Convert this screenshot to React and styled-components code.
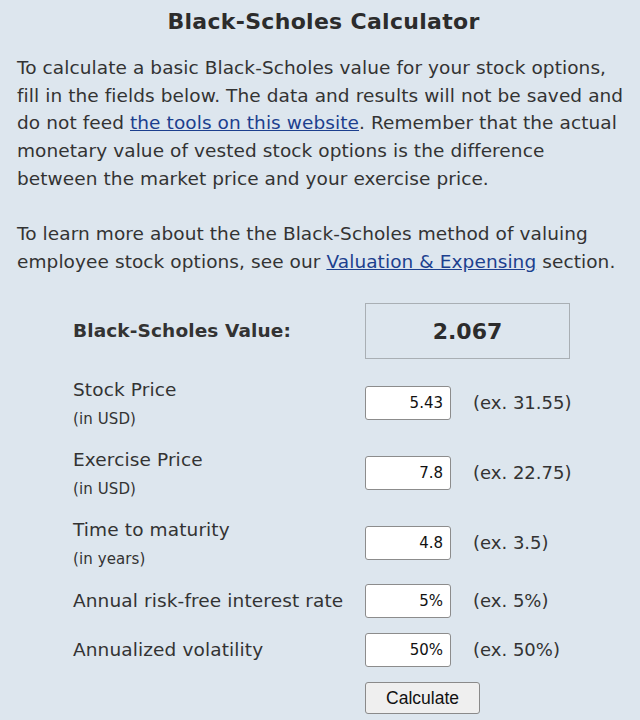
import React from "react";
import styled, { createGlobalStyle } from "styled-components";

const GlobalStyle = createGlobalStyle`
  html, body {
    margin: 0;
    padding: 0;
    background: #dde6ee;
  }
  body {
    font-family: "DejaVu Sans", Verdana, sans-serif;
    color: #333333;
  }
`;

const Page = styled.div`
  width: 640px;
  box-sizing: border-box;
  padding: 8px 10px 0 17px;
`;

const Title = styled.h1`
  margin: 0 0 18px;
  font-size: 22px;
  letter-spacing: 0.3px;
  line-height: 28px;
  font-weight: 700;
  text-align: center;
  color: #2c2c2c;
`;

const Intro = styled.p`
  margin: 0 0 ${(p) => p.$after || 27.7}px;
  font-size: 18.5px;
  letter-spacing: 0.08px;
  line-height: 27.7px;
`;

const Link = styled.a`
  color: #1c3f8e;
  text-decoration: underline;
`;

const Form = styled.div`
  display: flex;
  flex-direction: column;
  padding-left: 56px;
`;

const Row = styled.div`
  display: grid;
  grid-template-columns: 270px ${(p) => (p.$wide ? "205px" : "86px")} auto;
  align-items: center;
  column-gap: 22px;
  padding: ${(p) => p.$pad || "6px 0"};
`;

const LabelBlock = styled.div`
  margin-bottom: ${(p) => (p.$two ? "-3px" : "0")};
`;

const Label = styled.div`
  font-size: 18.5px;
  letter-spacing: 0.12px;
  line-height: 28px;
  white-space: nowrap;
  padding-top: ${(p) => (p.$two ? "2px" : "0")};
  font-weight: ${(p) => (p.$bold ? 700 : 400)};
`;

const SubLabel = styled.div`
  font-size: 15px;
  letter-spacing: 0.1px;
  line-height: 31px;
`;

const ValueBox = styled.div`
  box-sizing: border-box;
  height: 56px;
  border: 1px solid #a9afb4;
  display: flex;
  align-items: center;
  justify-content: center;
  font-size: 22px;
  font-weight: 700;
  color: #2c2c2c;
`;

const Input = styled.input`
  box-sizing: border-box;
  width: 86px;
  height: 34px;
  border: 1px solid #8c8c8c;
  border-radius: 3px;
  background: #ffffff;
  padding: 0 7px;
  text-align: right;
  font-family: "DejaVu Sans", Verdana, sans-serif;
  font-size: 15px;
  color: #111;
`;

const Example = styled.span`
  font-size: 18px;
  line-height: 28px;
  white-space: nowrap;
`;

const Button = styled.button`
  box-sizing: border-box;
  width: 115px;
  height: 32px;
  border: 1px solid #8a8a8a;
  border-radius: 3px;
  background: #efefef;
  font-family: "Liberation Sans", Arial, sans-serif;
  font-size: 17.5px;
  color: #111;
  padding: 0;
`;

const fields = [
  { label: "Stock Price", sub: "(in USD)", value: "5.43", ex: "(ex. 31.55)" },
  { label: "Exercise Price", sub: "(in USD)", value: "7.8", ex: "(ex. 22.75)" },
  { label: "Time to maturity", sub: "(in years)", value: "4.8", ex: "(ex. 3.5)" },
  { label: "Annual risk-free interest rate", value: "5%", ex: "(ex. 5%)" },
  { label: "Annualized volatility", value: "50%", ex: "(ex. 50%)" },
];

export default function App() {
  return (
    <>
      <GlobalStyle />
      <Page>
        <Title>Black-Scholes Calculator</Title>
        <Intro>
          To calculate a basic Black-Scholes value for your stock options, fill
          in the fields below. The data and results will not be saved and do
          not feed <Link href="#">the tools on this website</Link>. Remember
          that the actual monetary value of vested stock options is the
          difference between the market price and your exercise price.
        </Intro>
        <Intro $after={19.6}>
          To learn more about the the Black-Scholes method of valuing employee
          stock options, see our <Link href="#">Valuation &amp; Expensing</Link>{" "}
          section.
        </Intro>
        <Form>
          <Row $wide $pad="8px 0 9px">
            <Label $bold>Black-Scholes Value:</Label>
            <ValueBox>2.067</ValueBox>
          </Row>
          {fields.map((f) => (
            <Row key={f.label} $pad={f.sub ? "6px 0" : "6px 0 9px"}>
              <LabelBlock $two={!!f.sub}>
                <Label $two={!!f.sub}>{f.label}</Label>
                {f.sub && <SubLabel>{f.sub}</SubLabel>}
              </LabelBlock>
              <Input type="text" defaultValue={f.value} />
              <Example>{f.ex}</Example>
            </Row>
          ))}
          <Row $pad="6px 0">
            <div />
            <Button type="button">Calculate</Button>
          </Row>
        </Form>
      </Page>
    </>
  );
}
